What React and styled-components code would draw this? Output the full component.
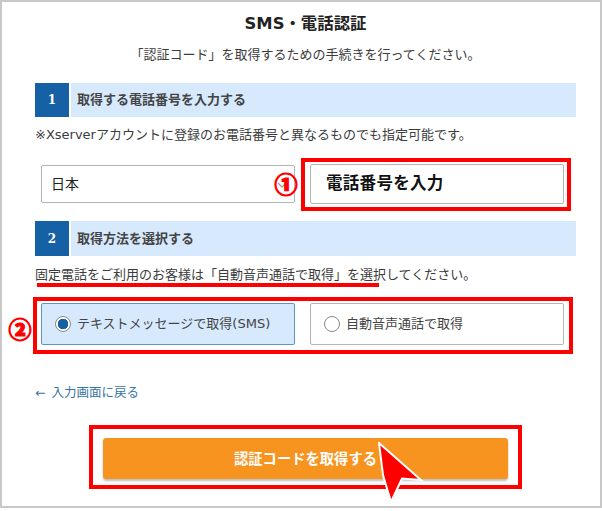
import React from 'react'
import styled, { createGlobalStyle } from 'styled-components'

const GlobalStyle = createGlobalStyle`
  html, body {
    margin: 0;
    padding: 0;
    background: #fff;
  }
  * {
    box-sizing: border-box;
  }
`

const App = () => {
  return (
    <Frame>
      <GlobalStyle />
      <Title>SMS・電話認証</Title>
      <Lead>「認証コード」を取得するための手続きを行ってください。</Lead>

      <SectionHead>
        <StepNo>1</StepNo>
        <StepLabel>取得する電話番号を入力する</StepLabel>
      </SectionHead>
      <Note>※Xserverアカウントに登録のお電話番号と異なるものでも指定可能です。</Note>
      <FieldRow>
        <SelectBox>
          日本
          <Chevron width="10" height="6" viewBox="0 0 10 6">
            <path d="M1 1l4 4 4-4" fill="none" stroke="#999" strokeWidth="1.2" />
          </Chevron>
        </SelectBox>
        <PhoneBox>電話番号を入力</PhoneBox>
        <Marker $left={239} $top={6}>①</Marker>
        <Highlight $left={266} $top={-7} $width={270} $height={53} />
      </FieldRow>

      <SectionHead $second>
        <StepNo>2</StepNo>
        <StepLabel>取得方法を選択する</StepLabel>
      </SectionHead>
      <Note $tight>
        固定電話をご利用のお客様は「自動音声通話で取得」を選択してください。
        <Underline />
      </Note>
      <FieldRow $radio>
        <RadioBox $active>
          <RadioDot $active />
          テキストメッセージで取得(SMS)
        </RadioBox>
        <RadioBox>
          <RadioDot />
          自動音声通話で取得
        </RadioBox>
        <Marker $left={-27} $top={13}>②</Marker>
        <Highlight $left={-2} $top={-6} $width={540} $height={57} />
      </FieldRow>

      <BackLink>← 入力画面に戻る</BackLink>

      <SubmitRow>
        <SubmitButton>認証コードを取得する</SubmitButton>
        <Highlight $left={54} $top={-13} $width={433} $height={64} />
        <Pointer width="46" height="62" viewBox="0 0 46 62">
          <path d="M1 1L43 38L24 36.500L13 60L5 33Z" fill="#f00" stroke="#fff" strokeWidth="2" strokeLinejoin="miter" />
        </Pointer>
      </SubmitRow>
    </Frame>
  )
}

const Frame = styled.div`
  width: 602px;
  height: 508px;
  border: 2px solid #c8c8c8;
  padding: 12px 24px 0 33px;
  background: #fff;
  color: #3c3c3c;
  font-family: "DejaVu Sans", "Noto Sans CJK JP", sans-serif;
  font-size: 13px;
  line-height: 20px;
`
const Title = styled.h1`
  margin: 0;
  height: 20px;
  font-size: 16.400px;
  line-height: 20px;
  font-weight: 700;
  text-align: center;
  color: #222;
`
const Lead = styled.p`
  margin: 11px 0 0;
  text-align: center;
`
const SectionHead = styled.div`
  display: flex;
  gap: 2px;
  height: ${(p) => (p.$second ? '35px' : '34px')};
  margin-top: 18px;
`
const StepNo = styled.div`
  display: flex;
  align-items: center;
  justify-content: center;
  width: 34px;
  background: #1660a6;
  color: #fff;
  font-family: "DejaVu Serif", serif;
  font-size: 12px;
  font-weight: 700;
`
const StepLabel = styled.div`
  flex: 1;
  display: flex;
  align-items: center;
  padding-left: 6px;
  background: #d7eafd;
  font-size: 13px;
  font-weight: 700;
  color: #444;
`
const Note = styled.p`
  position: relative;
  margin: ${(p) => (p.$tight ? '9px' : '8px')} 0 0;
`
const Underline = styled.span`
  position: absolute;
  left: 2px;
  top: 18px;
  width: 342px;
  height: 4px;
  background: #f00;
`
const FieldRow = styled.div`
  position: relative;
  display: grid;
  grid-template-columns: 254px 254px;
  gap: 15px;
  padding: 0 6px;
  margin-top: ${(p) => (p.$radio ? '18px' : '20px')};
  height: ${(p) => (p.$radio ? '42px' : '38px')};
`
const SelectBox = styled.div`
  position: relative;
  display: flex;
  align-items: center;
  padding-left: 9px;
  border: 1px solid #b5b5b5;
  border-radius: 2px;
  font-size: 14px;
  color: #222;
`
const Chevron = styled.svg`
  position: absolute;
  right: 7px;
  top: 16px;
`
const PhoneBox = styled.div`
  display: flex;
  align-items: center;
  padding-left: 15px;
  margin: -1px 0;
  border: 1px solid #b5b5b5;
  border-radius: 2px;
  font-size: 16.500px;
  font-weight: 700;
  letter-spacing: 0.300px;
  color: #111;
`
const RadioBox = styled.div`
  display: flex;
  align-items: center;
  gap: 6px;
  padding-left: 13px;
  border: 1px solid ${(p) => (p.$active ? '#5f93c0' : '#b5b5b5')};
  border-radius: 2px;
  background: ${(p) => (p.$active ? '#d7eafd' : '#fff')};
  color: #444;
`
const RadioDot = styled.span`
  display: block;
  flex: none;
  width: 16px;
  height: 16px;
  border-radius: 50%;
  border: 1px solid #888;
  background: ${(p) => (p.$active ? 'radial-gradient(circle, #1660a6 0 5px, #fff 5.500px)' : '#fff')};
`
const Marker = styled.span`
  position: absolute;
  left: ${(p) => p.$left}px;
  top: ${(p) => p.$top}px;
  width: 24px;
  height: 24px;
  font-family: "Noto Sans CJK JP", sans-serif;
  font-size: 23px;
  line-height: 24px;
  font-weight: 900;
  text-align: center;
  color: #f00;
  -webkit-text-stroke: 1.200px #f00;
`
const Highlight = styled.div`
  position: absolute;
  left: ${(p) => p.$left}px;
  top: ${(p) => p.$top}px;
  width: ${(p) => p.$width}px;
  height: ${(p) => p.$height}px;
  border: 4px solid #f00;
  pointer-events: none;
`
const BackLink = styled.a`
  display: block;
  margin-top: 38px;
  font-size: 12.500px;
  word-spacing: 2px;
  color: #37759f;
`
const SubmitRow = styled.div`
  position: relative;
  display: flex;
  justify-content: center;
  margin-top: 35px;
`
const SubmitButton = styled.div`
  display: flex;
  align-items: center;
  justify-content: center;
  width: 405px;
  height: 41px;
  border-radius: 3px;
  background: #f79420;
  box-shadow: 0 2px 2px rgba(0, 0, 0, 0.25);
  color: #fff;
  font-size: 14.300px;
  font-weight: 700;
`
const Pointer = styled.svg`
  position: absolute;
  left: 343px;
  top: 4px;
`

export default App
